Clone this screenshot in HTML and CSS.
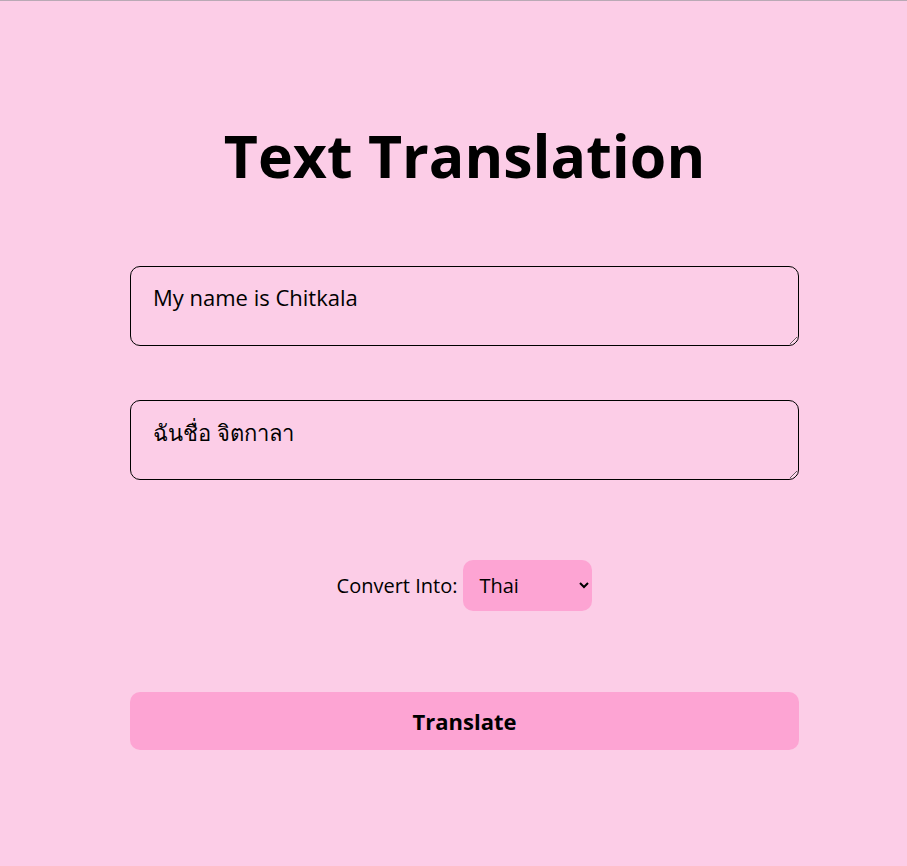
FILE: index.html
```html
<!DOCTYPE html>
<html lang="en">
<head>
<meta charset="utf-8">
<title>Text Translation</title>
<link rel="stylesheet" href="styles.css">
</head>
<body>
  <main class="app">
    <h1 class="title">Text Translation</h1>
    <textarea class="box box-source">My name is Chitkala</textarea>
    <textarea class="box box-target">ฉันชื่อ จิตกาลา</textarea>
    <div class="convert">
      <label class="convert-label" for="lang">Convert Into:</label>
      <select id="lang" class="lang">
        <option>Thai</option>
        <option>English</option>
        <option>Hindi</option>
      </select>
    </div>
    <button class="btn" type="button">Translate</button>
  </main>
</body>
</html>
```

FILE: styles.css
```css
html {
  background: #fccde7;
  border-top: 1px solid #b9a9b5;
}
body {
  margin: 0;
  padding: 0 0 0 22px;
  font-family: "Open Sans", "Noto Sans", sans-serif;
  color: #000;
}
.app {
  width: 669px;
  margin: 0 auto;
  display: flex;
  flex-direction: column;
  align-items: stretch;
  padding-top: 111px;
}
.title {
  margin: 0 0 68px;
  text-align: center;
  font-size: 59px;
  line-height: 86px;
  font-weight: 700;
}
.box {
  box-sizing: border-box;
  height: 80px;
  padding: 15px 22px;
  border: 1px solid #000;
  border-radius: 10px;
  background: transparent;
  font-family: "Open Sans", "Noto Sans", sans-serif;
  font-size: 22px;
  color: #000;
  resize: vertical;
}
.box-target {
  margin-top: 54px;
}
.convert {
  margin-top: 80px;
  display: flex;
  justify-content: center;
  align-items: center;
  gap: 6px;
  font-size: 20px;
}
.lang {
  width: 129px;
  height: 51px;
  padding: 0 12px;
  border: none;
  border-radius: 10px;
  background: #fda4d3;
  font-family: "Open Sans", "Noto Sans", sans-serif;
  font-size: 20px;
  color: #000;
}
.btn {
  margin-top: 81px;
  height: 58px;
  border: none;
  border-radius: 10px;
  background: #fda4d3;
  font-family: "Open Sans", "Noto Sans", sans-serif;
  font-size: 22px;
  font-weight: 700;
  color: #000;
}
```
